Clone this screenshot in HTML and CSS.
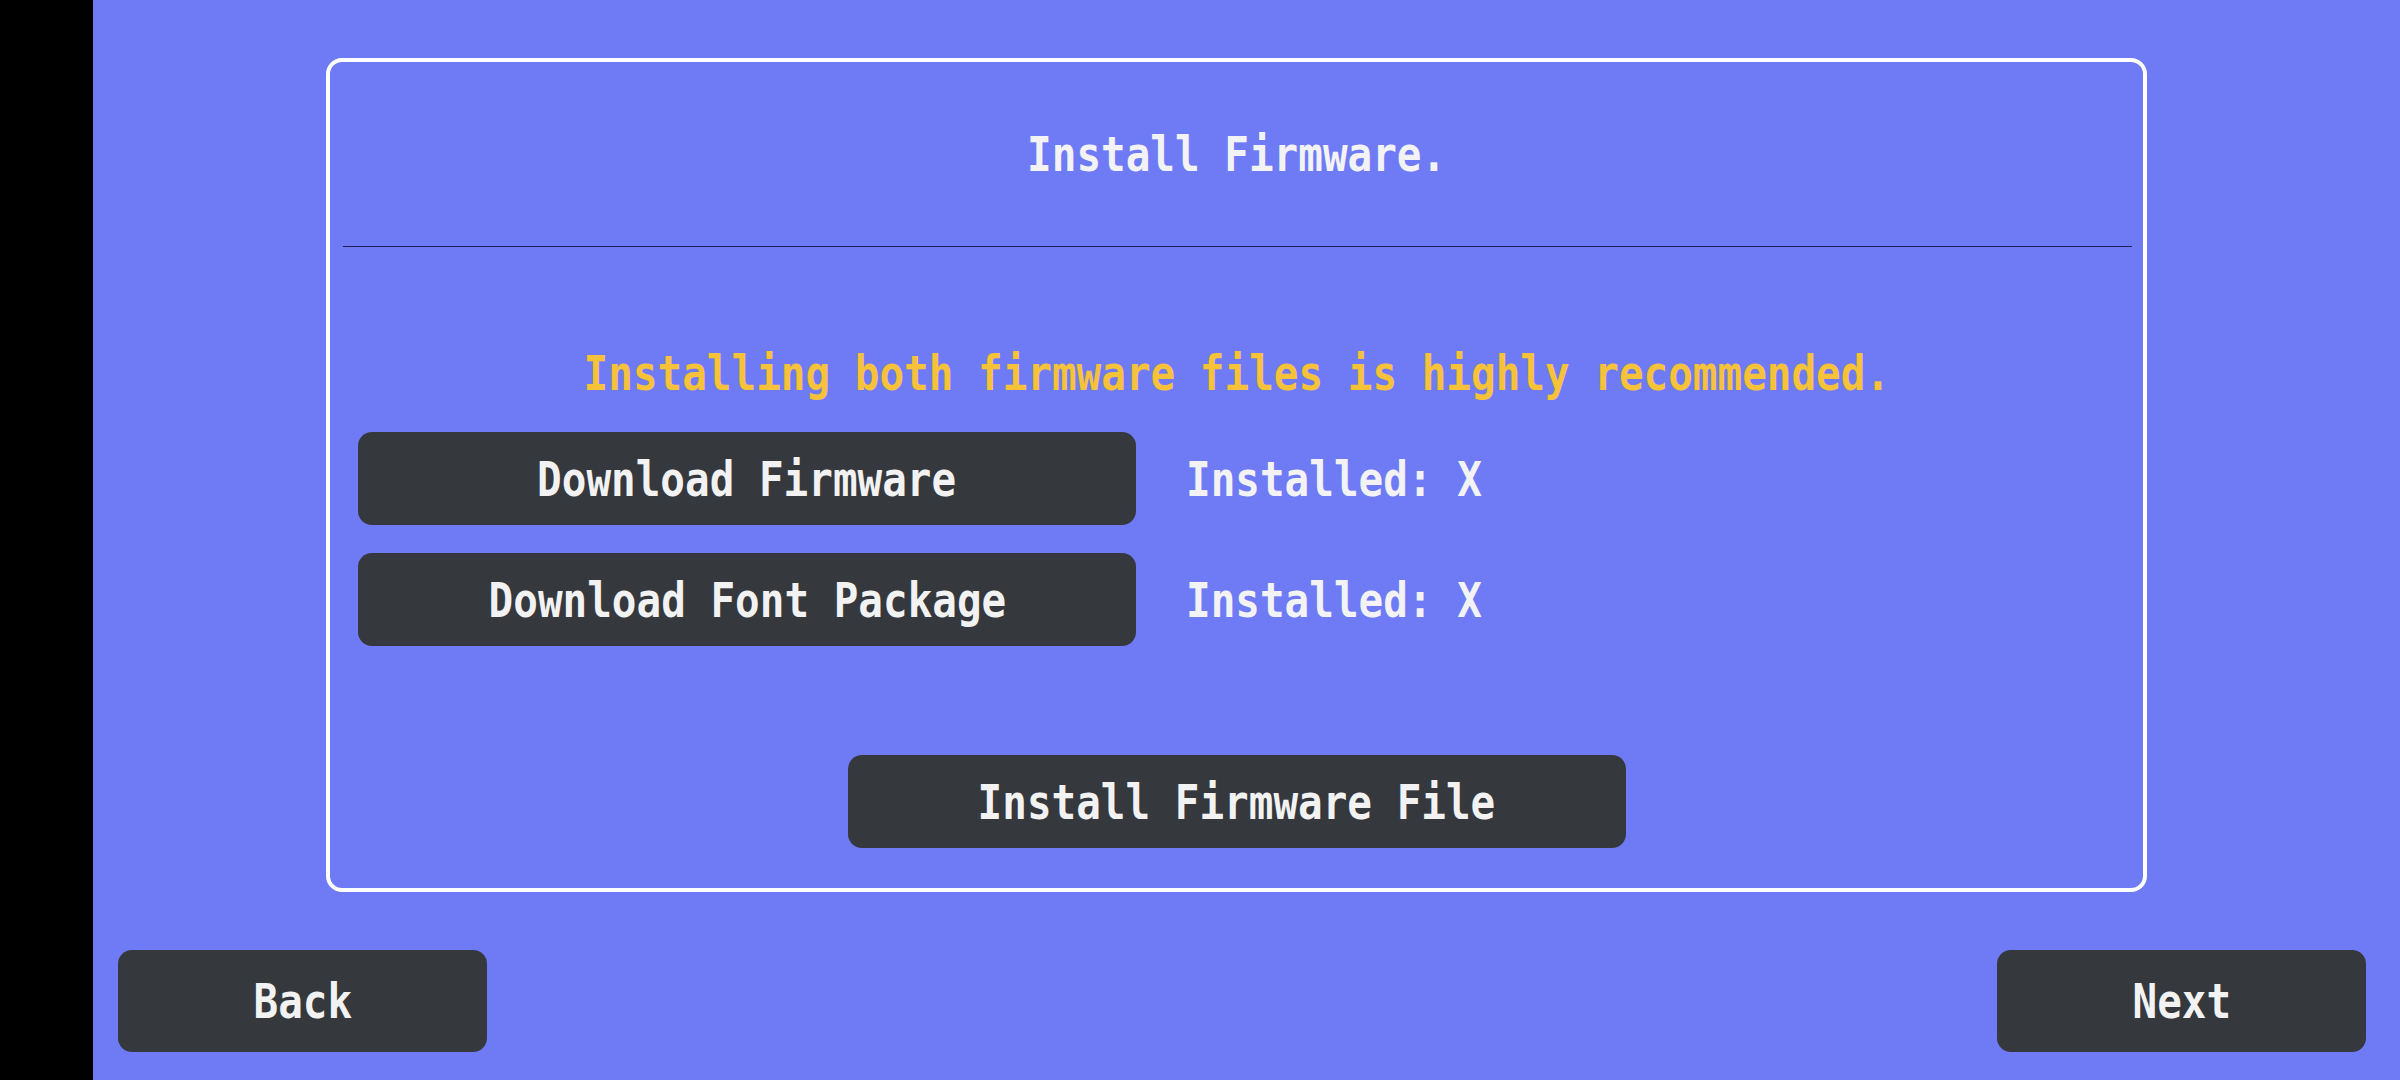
FILE: index.html
```html
<!DOCTYPE html>
<html lang="en">

<head>
    <meta charset="utf-8">
    <meta name="viewport" content="width=device-width, initial-scale=1.0">
    <title>Install Firmware</title>

    <link rel="stylesheet" href="styles.css">
</head>

<body>
    <div class="side"></div>

    <div class="app">
        <section class="panel">
            <header class="panel-head">
                <h1><span class="txt">Install Firmware.</span></h1>
            </header>
            <hr class="divider">

            <div class="panel-body">
                <p class="warn"><span class="txt">Installing both firmware files is highly recommended.</span></p>

                <div class="row">
                    <button class="btn wide"><span class="txt">Download Firmware</span></button>
                    <span class="status"><span class="txt left">Installed: X</span></span>
                </div>
                <div class="row">
                    <button class="btn wide"><span class="txt">Download Font Package</span></button>
                    <span class="status"><span class="txt left">Installed: X</span></span>
                </div>

                <div class="install">
                    <button class="btn wide"><span class="txt">Install Firmware File</span></button>
                </div>
            </div>
        </section>

        <footer class="nav">
            <button class="btn nav-btn"><span class="txt">Back</span></button>
            <button class="btn nav-btn"><span class="txt">Next</span></button>
        </footer>
    </div>
</body>

</html>
```

FILE: styles.css
```css
body {
    margin: 0;
    height: 100vh;
    display: flex;
    background: #000;
    font-family: "DejaVu Sans Mono", "Liberation Mono", monospace;
    font-weight: bold;
    font-size: 48px;
    color: #f3f3f5;
    overflow: hidden;
}

.side {
    width: 93px;
    flex-shrink: 0;
    background: #000;
}

.app {
    flex: 1;
    display: flex;
    flex-direction: column;
    background: #6f7bf4;
}

/* condensed look of the device font */
.txt {
    display: inline-block;
    transform: scaleX(0.853);
    white-space: nowrap;
}

.txt.left {
    transform-origin: left center;
}

.panel {
    box-sizing: border-box;
    width: 1821px;
    height: 834px;
    margin: 58px 0 0 233px;
    border: 4px solid #fff;
    border-radius: 16px;
    display: flex;
    flex-direction: column;
}

.panel-head {
    height: 184px;
    display: flex;
    align-items: center;
    justify-content: center;
}

h1 {
    margin: 0;
    font-size: 48px;
    line-height: 60px;
}

.divider {
    margin: 0 11px 0 13px;
    border: none;
    height: 1px;
    background: #1d1f52;
}

.panel-body {
    padding: 0 28px;
    display: flex;
    flex-direction: column;
}

.warn {
    margin: 96px 0 29px;
    text-align: center;
    line-height: 60px;
    color: #f6c23a;
}

.row {
    display: flex;
    align-items: center;
    gap: 50px;
    margin-bottom: 28px;
}

.btn {
    font: inherit;
    color: #f2f2f2;
    background: #35383d;
    border: none;
    border-radius: 14px;
    padding: 0;
    text-align: center;
}

.btn.wide {
    width: 778px;
    height: 93px;
}

.status {
    line-height: 60px;
}

.install {
    display: flex;
    justify-content: center;
    margin-top: 81px;
}

.nav {
    display: flex;
    justify-content: space-between;
    margin-top: 58px;
    padding: 0 34px 0 25px;
}

.nav-btn {
    width: 369px;
    height: 102px;
    border-radius: 14px;
}
```
